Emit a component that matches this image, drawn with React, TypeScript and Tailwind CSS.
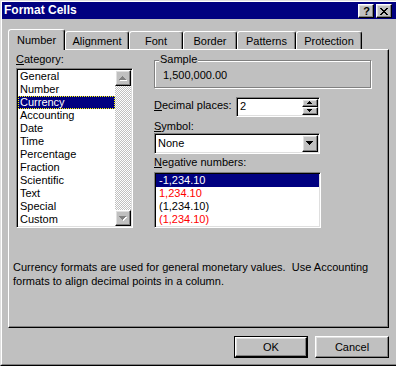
const raised =
  'border border-t-white border-l-white border-r-black border-b-black shadow-[inset_-1px_-1px_#808080,inset_1px_1px_#dfdfdf]'
const sunken =
  'border border-t-[#808080] border-l-[#808080] border-r-white border-b-white shadow-[inset_1px_1px_#000,inset_-1px_-1px_#dfdfdf] p-[1px]'

const tabs = [
  { label: 'Number', w: 'w-[57px]' },
  { label: 'Alignment', w: 'w-[64px]' },
  { label: 'Font', w: 'w-[54px]' },
  { label: 'Border', w: 'w-[54px]' },
  { label: 'Patterns', w: 'w-[59px]' },
  { label: 'Protection', w: 'w-[66px]' },
]

const categories = [
  'General',
  'Number',
  'Currency',
  'Accounting',
  'Date',
  'Time',
  'Percentage',
  'Fraction',
  'Scientific',
  'Text',
  'Special',
  'Custom',
]

const negatives = [
  { text: '-1,234.10', red: false },
  { text: '1,234.10', red: true },
  { text: '(1,234.10)', red: false },
  { text: '(1,234.10)', red: true },
]

// pixel triangles, rows of [x, width]
function Triangle({ rows, fill, shadow, down }: { rows: number[][]; fill: string; shadow?: string; down?: boolean }) {
  const h = rows.length
  const w = Math.max(...rows.map(([x, wd]) => x + wd))
  const ordered = down ? [...rows].reverse() : rows
  return (
    <svg width={w + 1} height={h + 1} shapeRendering="crispEdges">
      {shadow &&
        ordered.map(([x, wd], i) => <rect key={'s' + i} x={x + 1} y={i + 1} width={wd} height={1} fill={shadow} />)}
      {ordered.map(([x, wd], i) => (
        <rect key={i} x={x} y={i} width={wd} height={1} fill={fill} />
      ))}
    </svg>
  )
}

const big = [
  [3, 1],
  [2, 3],
  [1, 5],
  [0, 7],
]
const small = [
  [2, 1],
  [1, 3],
  [0, 5],
]

function CloseGlyph() {
  const px = [
    [0, 0], [1, 0], [6, 0], [7, 0],
    [1, 1], [2, 1], [5, 1], [6, 1],
    [2, 2], [3, 2], [4, 2], [5, 2],
    [3, 3], [4, 3],
    [2, 4], [3, 4], [4, 4], [5, 4],
    [1, 5], [2, 5], [5, 5], [6, 5],
    [0, 6], [1, 6], [6, 6], [7, 6],
  ]
  return (
    <svg width="8" height="7" shapeRendering="crispEdges">
      {px.map(([x, y], i) => (
        <rect key={i} x={x} y={y} width={1} height={1} fill="#000" />
      ))}
    </svg>
  )
}

export default function App() {
  return (
    <div className="w-[396px] h-[366px] overflow-hidden bg-[#c0c0c0] text-black text-[11px] leading-[13px] font-['Liberation_Sans',Arial,sans-serif] flex flex-col border-t border-l border-b border-t-[#dfdfdf] border-l-[#dfdfdf] border-b-black">
      <div className="flex-1 flex flex-col border-t border-l border-b border-t-white border-l-white border-b-[#808080]">
        {/* title bar */}
        <div className="h-[17px] bg-[#000080] flex items-start justify-between pl-[2px] pr-[4px]">
          <span className="text-white font-bold text-[12px] leading-[15px] mt-[1px]">Format Cells</span>
          <div className="flex gap-[2px] mt-[2px]">
            <div className={`${raised} w-[16px] h-[14px] bg-[#c0c0c0] flex items-center justify-center`}>
              <span className="font-bold text-[11px] leading-[11px] ml-[1px]">?</span>
            </div>
            <div className={`${raised} w-[16px] h-[14px] bg-[#c0c0c0] flex items-center justify-center`}>
              <CloseGlyph />
            </div>
          </div>
        </div>

        {/* tabs */}
        <div className="mt-[10px] h-[20px] flex items-end pl-[6px]">
          {tabs.map((t, i) => {
            const active = i === 0
            return (
              <div
                key={t.label}
                className={`${t.w} ${
                  active ? 'h-[21px] -mb-[1px] relative z-10 pt-[4px]' : 'h-[18px] pt-[3px]'
                } bg-[#c0c0c0] border-l border-t border-r border-l-white border-t-white border-r-black rounded-t-[3px] shadow-[inset_-1px_0_#808080] text-center`}
              >
                {t.label}
              </div>
            )
          })}
        </div>

        {/* panel */}
        <div className="ml-[6px] w-[381px] h-[279px] border border-t-white border-l-white border-r-black border-b-black shadow-[inset_-1px_-1px_#808080]">
          <div className="flex pl-[7px] pt-[3px]">
            {/* category */}
            <div className="w-[117px]">
              <div className="h-[13px]">
                <u>C</u>ategory:
              </div>
              <div className={`${sunken} mt-[2px] h-[160px] bg-white flex`}>
                <div className="w-[97px]">
                  {categories.map((c) => {
                    const sel = c === 'Currency'
                    return (
                      <div
                        key={c}
                        className={`h-[13px] pl-[2px] ${
                          sel
                            ? 'bg-[#000080] text-white outline-1 outline-dotted outline-[#ffff00] -outline-offset-1'
                            : ''
                        }`}
                      >
                        {c}
                      </div>
                    )
                  })}
                </div>
                <div className="w-[16px] flex flex-col">
                  <div className={`${raised} h-[16px] bg-[#c0c0c0] flex items-center justify-center`}>
                    <Triangle rows={big} fill="#808080" shadow="#fff" />
                  </div>
                  <div className="flex-1 bg-[image:repeating-conic-gradient(#fff_0_25%,#c0c0c0_0_50%)] bg-[length:2px_2px]" />
                  <div className={`${raised} h-[16px] bg-[#c0c0c0] flex items-center justify-center`}>
                    <Triangle rows={big} fill="#808080" shadow="#fff" down />
                  </div>
                </div>
              </div>
            </div>

            {/* right column */}
            <div className="ml-[21px] w-[217px] pt-[7px]">
              <div className="relative h-[28px] border border-[#808080] shadow-[inset_1px_1px_#fff,1px_1px_#fff] pl-[8px] pt-[8px]">
                <span className="absolute left-[4px] -top-[8px] px-[1px] bg-[#c0c0c0]">Sample</span>
                1,500,000.00
              </div>

              <div className="mt-[9px] flex h-[20px]">
                <div className="w-[82px] pt-[2px]">
                  <u>D</u>ecimal places:
                </div>
                <div className={`${sunken} w-[84px] h-[20px] bg-white flex`}>
                  <div className="flex-1 pl-[2px] pt-[1px]">2</div>
                  <div className="w-[16px] flex flex-col">
                    <div className={`${raised} h-[8px] bg-[#c0c0c0] flex items-center justify-center`}>
                      <Triangle rows={small} fill="#000" />
                    </div>
                    <div className={`${raised} h-[8px] bg-[#c0c0c0] flex items-center justify-center`}>
                      <Triangle rows={small} fill="#000" down />
                    </div>
                  </div>
                </div>
              </div>

              <div className="mt-[3px] h-[13px]">
                <u>S</u>ymbol:
              </div>
              <div className={`${sunken} w-[166px] h-[21px] bg-white flex`}>
                <div className="flex-1 pl-[2px] flex items-center">None</div>
                <div className={`${raised} w-[16px] bg-[#c0c0c0] flex items-center justify-center`}>
                  <Triangle rows={big} fill="#000" down />
                </div>
              </div>

              <div className="mt-[2px] h-[13px]">
                <u>N</u>egative numbers:
              </div>
              <div className={`${sunken} mt-[3px] w-[167px] h-[56px] bg-white`}>
                {negatives.map((n, i) => (
                  <div
                    key={i}
                    className={`h-[13px] pl-[3px] ${
                      i === 0 ? 'bg-[#000080] text-white' : n.red ? 'text-[#ff0000]' : ''
                    }`}
                  >
                    {n.text}
                  </div>
                ))}
              </div>
            </div>
          </div>

          <div className="mt-[32px] pl-[4px] whitespace-pre leading-[14px]">
            {'Currency formats are used for general monetary values.  Use Accounting'}
            <br />
            {'formats to align decimal points in a column.'}
          </div>
        </div>

        {/* buttons */}
        <div className="mt-[8px] flex justify-end gap-[7px] pr-[7px]">
          <div className="w-[74px] h-[22px] border border-black">
            <div className={`${raised} h-full bg-[#c0c0c0] flex items-center justify-center`}>OK</div>
          </div>
          <div className={`${raised} w-[74px] h-[22px] bg-[#c0c0c0] flex items-center justify-center`}>Cancel</div>
        </div>
      </div>
    </div>
  )
}
